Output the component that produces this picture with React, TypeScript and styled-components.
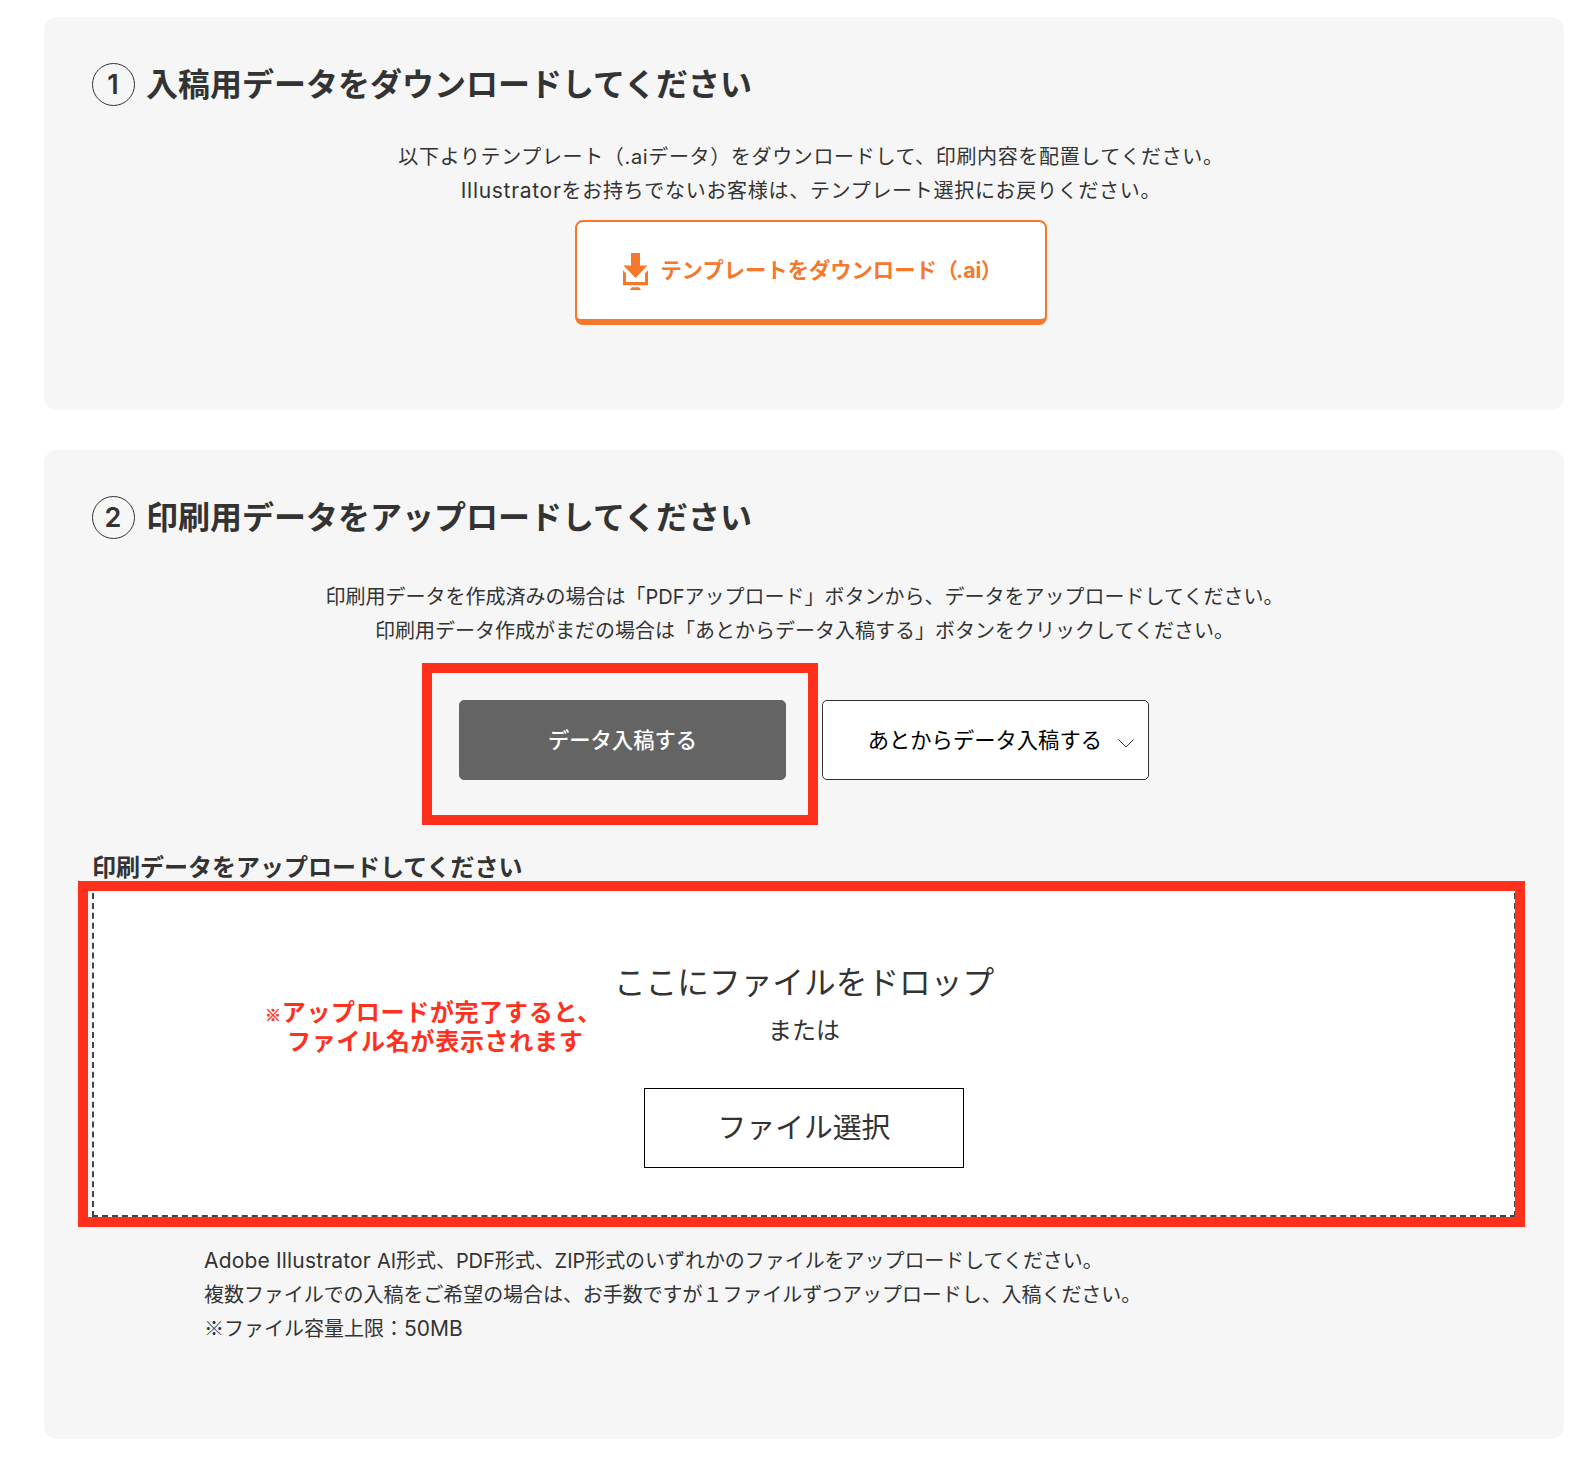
import React from "react";
import styled, { createGlobalStyle } from "styled-components";

const GlobalStyle = createGlobalStyle`
  *, *::before, *::after { box-sizing: border-box; }
  body {
    margin: 0;
    background: #fff;
    color: #333;
    font-family: Inter, "Noto Sans CJK JP", sans-serif;
  }
  button { font-family: inherit; margin: 0; padding: 0; cursor: pointer; }
  h2, h3, p { margin: 0; }
`;

const Page = styled.main`
  display: flex;
  flex-direction: column;
  gap: 40px;
  width: 1590px;
  height: 1466px;
  padding: 17px 26px 27px 44px;
`;

const Card = styled.section<{ $height: number }>`
  display: flex;
  flex-direction: column;
  height: ${(p) => p.$height}px;
  padding: 46px 48px 0;
  border-radius: 13px;
  background: #f6f6f6;
`;

const Heading = styled.h2`
  display: flex;
  align-items: center;
  height: 43px;
  gap: 11px;
  font-size: 32px;
  line-height: 42px;
  font-weight: 700;
  white-space: nowrap;
`;

const StepNumber = styled.span`
  display: flex;
  align-items: center;
  justify-content: center;
  width: 43px;
  height: 43px;
  padding-right: 1px;
  border: 1px solid #333;
  border-radius: 50%;
  font-size: 27px;
  font-weight: 600;
`;

const Lead = styled.div<{ $top: number; $shift?: number }>`
  display: flex;
  flex-direction: column;
  align-items: center;
  margin-top: ${(p) => p.$top}px;
  padding-left: ${(p) => p.$shift ?? 0}px;
`;

const Line = styled.p<{ $spacing?: number }>`
  font-size: 20px;
  line-height: 34px;
  letter-spacing: ${(p) => p.$spacing ?? 0}px;
  white-space: nowrap;
`;

const Latin = styled.span<{ $spacing: number; $size?: number }>`
  font-size: ${(p) => p.$size ?? 20}px;
  line-height: 1;
  letter-spacing: ${(p) => p.$spacing}px;
`;

const Mark = styled.span`
  font-family: "Noto Sans CJK JP", sans-serif;
  line-height: 1;
`;

const DownloadButton = styled.button`
  display: flex;
  align-items: center;
  align-self: center;
  gap: 12.5px;
  width: 472px;
  height: 105px;
  margin: 12px 0 0 14px;
  padding-left: 46px;
  border: 2px solid #f5782d;
  border-bottom-width: 6px;
  border-radius: 8px;
  background: #fff;
  color: #f5782d;
  font-size: 21.3px;
  font-weight: 700;
  white-space: nowrap;
`;

const DownloadLabel = styled.span`
  padding-bottom: 4px;
`;

const Extension = styled.span`
  margin: 0 -0.5px 0 -2px;
`;

const ArrowIntoTray = styled.svg`
  flex: none;
  margin-top: 2px;
`;

const DownloadIcon = () => (
  <ArrowIntoTray width="25" height="37" viewBox="0 0 25 37" fill="currentColor">
    <path d="M8 0h9v12.5h7.5L12.5 25 .5 12.5H8z" />
    <path d="M0 17.2l3 3V29h19v-8.8l3-3V32.2H0z" />
    <path d="M9 34.2h7l2.2 2.8H6.6z" />
  </ArrowIntoTray>
);

const Choices = styled.div`
  display: flex;
  justify-content: center;
  gap: 36px;
  margin-top: 52px;
`;

const Highlighted = styled.div`
  position: relative;
  display: flex;
`;

const RedFrame = styled.div<{ $inset: string }>`
  position: absolute;
  inset: ${(p) => p.$inset};
  border: 10px solid #ff311c;
  pointer-events: none;
`;

const Choice = styled.button<{ $active?: boolean }>`
  display: flex;
  align-items: center;
  justify-content: ${(p) => (p.$active ? "center" : "flex-end")};
  width: 327px;
  height: 80px;
  padding-right: ${(p) => (p.$active ? 0 : 14)}px;
  border: 1px solid ${(p) => (p.$active ? "#646464" : "#333")};
  border-radius: 5px;
  background: ${(p) => (p.$active ? "#646464" : "#fff")};
  color: ${(p) => (p.$active ? "#fff" : "#000")};
  font-size: 21.3px;
  line-height: 32px;
  font-weight: ${(p) => (p.$active ? 500 : 400)};
  white-space: nowrap;
`;

const Chevron = styled.svg`
  margin: 7px 0 0 16px;
`;

const SubHeading = styled.h3`
  margin-top: 73px;
  font-size: 24px;
  line-height: 30px;
  font-weight: 700;
`;

const DropZone = styled.div`
  position: relative;
  display: flex;
  flex-direction: column;
  align-items: center;
  width: 1424px;
  height: 334px;
  padding-top: 74px;
  border: 2px dashed #444;
  background: #fff;
`;

const DropTitle = styled.p`
  font-size: 31.7px;
  line-height: 48px;
`;

const DropOr = styled.p`
  font-size: 24px;
  line-height: 36px;
  margin-top: 6px;
`;

const FileButton = styled.button`
  width: 320px;
  height: 80px;
  margin-top: 39px;
  padding-bottom: 5px;
  border: 1px solid #000;
  background: #fff;
  color: #333;
  font-size: 28.8px;
`;

const Note = styled.div`
  position: absolute;
  left: 171px;
  top: 113px;
  color: #ff311c;
  font-size: 24px;
  line-height: 29px;
  font-weight: 700;
  letter-spacing: 0.7px;
  white-space: nowrap;
`;

const NoteMark = styled(Mark)`
  font-size: 16px;
  -webkit-text-stroke: 0.5px currentColor;
`;

const NoteLine = styled.div<{ $indent?: number }>`
  height: 29px;
  padding-left: ${(p) => p.$indent ?? 0}px;
`;

const Remarks = styled.div`
  margin: 27px 0 0 112px;
`;

export default function App() {
  return (
    <>
      <GlobalStyle />
      <Page>
        <Card $height={393}>
          <Heading>
            <StepNumber>1</StepNumber>
            入稿用データをダウンロードしてください
          </Heading>
          <Lead $top={34} $shift={14}>
            <Line $spacing={0.65}>以下よりテンプレート（.aiデータ）をダウンロードして、印刷内容を配置してください。</Line>
            <Line $spacing={0.7}>
              <Latin $size={21} $spacing={0.7}>Illustrator</Latin>をお持ちでないお客様は、テンプレート選択にお戻りください。
            </Line>
          </Lead>
          <DownloadButton>
            <DownloadIcon />
            <DownloadLabel>
              テンプレートをダウンロード（<Extension>.ai</Extension>）
            </DownloadLabel>
          </DownloadButton>
        </Card>

        <Card $height={989}>
          <Heading>
            <StepNumber>2</StepNumber>
            印刷用データをアップロードしてください
          </Heading>
          <Lead $top={41} $shift={1}>
            <Line>印刷用データを作成済みの場合は「PDFアップロード」ボタンから、データをアップロードしてください。</Line>
            <Line>印刷用データ作成がまだの場合は「あとからデータ入稿する」ボタンをクリックしてください。</Line>
          </Lead>
          <Choices>
            <Highlighted>
              <Choice $active>データ入稿する</Choice>
              <RedFrame $inset="-37px -32px -45px -37px" />
            </Highlighted>
            <Choice>
              あとからデータ入稿する
              <Chevron width="16" height="9" viewBox="0 0 16 9" fill="none" stroke="#333" strokeWidth="1">
                <path d="M.5.5 8 8 15.5.5" />
              </Chevron>
            </Choice>
          </Choices>
          <SubHeading>印刷データをアップロードしてください</SubHeading>
          <DropZone>
            <DropTitle>ここにファイルをドロップ</DropTitle>
            <DropOr>または</DropOr>
            <FileButton>ファイル選択</FileButton>
            <Note>
              <NoteLine>
                <NoteMark>※</NoteMark>アップロードが完了すると、
              </NoteLine>
              <NoteLine $indent={22}>ファイル名が表示されます</NoteLine>
            </Note>
            <RedFrame $inset="-4px -11px -12px -16px" />
          </DropZone>
          <Remarks>
            <Line $spacing={-0.05}>
              <Latin $size={21} $spacing={0.17}>Adobe Illustrator </Latin>
              AI形式、PDF形式、ZIP形式のいずれかのファイルをアップロードしてください。
            </Line>
            <Line $spacing={-0.06}>複数ファイルでの入稿をご希望の場合は、お手数ですが１ファイルずつアップロードし、入稿ください。</Line>
            <Line>
              <Mark>※</Mark>ファイル容量上限：<Latin $size={21} $spacing={0}>50MB</Latin>
            </Line>
          </Remarks>
        </Card>
      </Page>
    </>
  );
}
